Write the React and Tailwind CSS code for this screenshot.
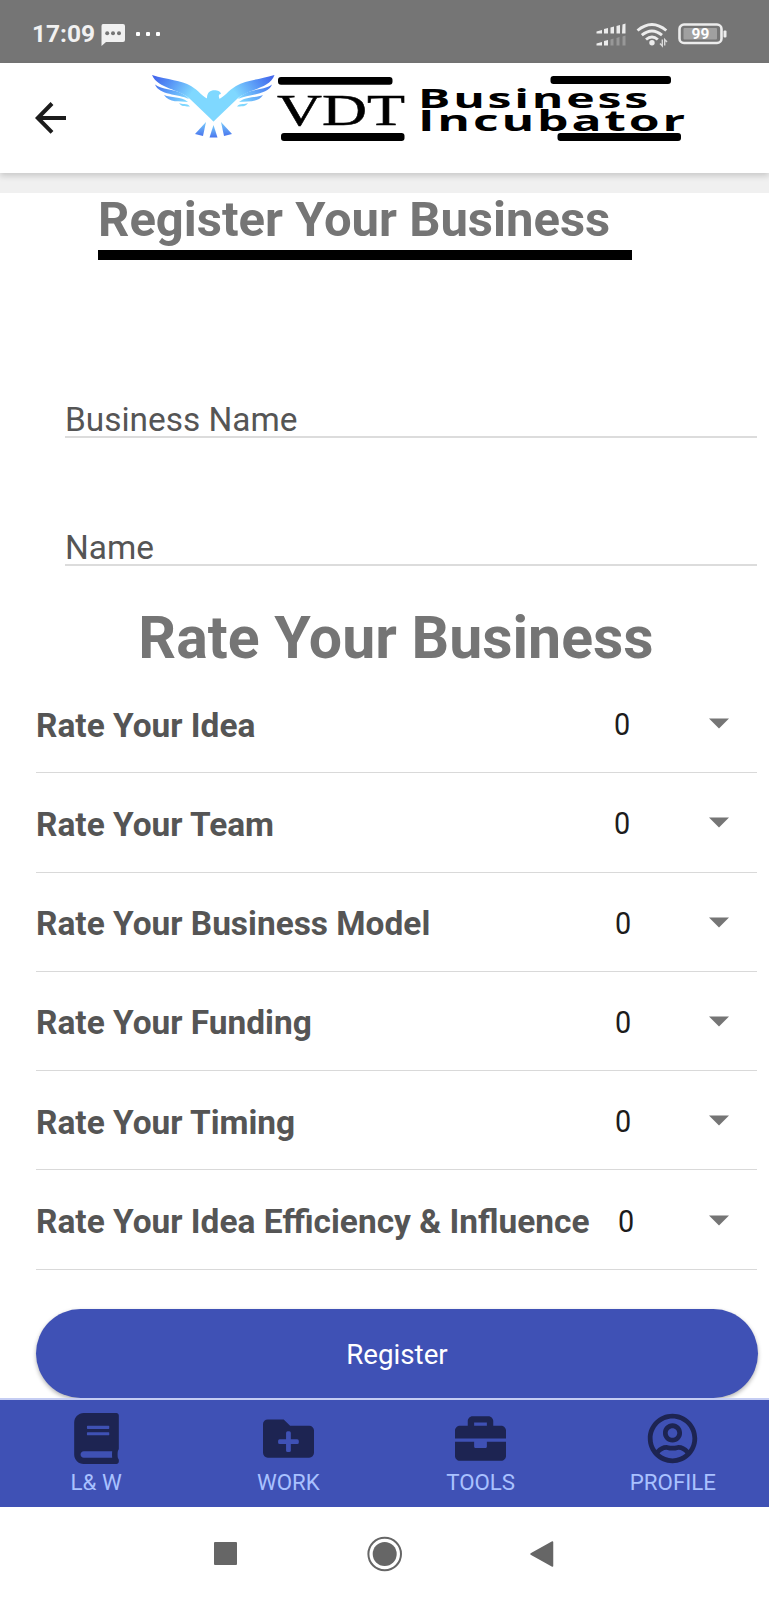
import { FaBook, FaFolderPlus, FaBriefcase, FaRegUserCircle } from "react-icons/fa";

function StatusBar() {
  return (
    <div className="flex h-[63px] items-center bg-[#757575] text-[#f1f1f1]">
      <span className="ml-8 mt-1.5 w-[64px] whitespace-nowrap text-[24.500px] font-bold leading-none">17:09</span>
      <svg className="ml-[5px] mt-[7px]" width="24" height="22" viewBox="0 0 24 22">
        <path d="M2 0H22Q24 0 24 2V16Q24 18 22 18H5L.5 22V2Q.5 0 2 0Z" fill="#f1f1f1" />
        <g fill="#757575">
          <circle cx="6.2" cy="9.3" r="2" />
          <circle cx="12" cy="9.3" r="2" />
          <circle cx="18" cy="9.3" r="2" />
        </g>
      </svg>
      <div className="ml-[11px] mt-1 flex gap-1.5">
        <i className="size-1 rounded-[1px] bg-white" />
        <i className="size-1 rounded-[1px] bg-white" />
        <i className="size-1 rounded-[1px] bg-white" />
      </div>
      <svg className="ml-auto mr-[41px] mt-2" width="132" height="26" viewBox="0 0 132 26" fill="#ececec">
        <path d="M.5 8.500 6 7v3.500H.5zM8 6l4-1v5.500H8zM14.500 4.500l3.500-1v7h-3.500zM20.500 3l3.500-1v8.500h-3.500zM26.500 1.500 29.500.5v10h-3.500z" />
        <path d="M.5 20.500 6 19v3.500H.5zM8 18l4-1v5.500H8z" />
        <path d="M14.500 16.500l3-1v7h-3zM20.500 15l3-1v8.500h-3zM26.500 13.500l3-1v10h-3z" opacity=".3" />
        <g fill="none" stroke="#ececec" strokeWidth="2.900">
          <path d="M41.500 7.500Q56 -4.500 70.300 7.500" />
          <path d="M45.800 12.200Q56 3.800 66 12.200" />
          <path d="M50 16.500Q56 11.300 61.800 16.500" />
        </g>
        <circle cx="56" cy="19.800" r="2.700" />
        <path d="M66.300 16.500V23L64 20.500M68.700 22.500V16.500L71 19" fill="none" stroke="#d8d8d8" strokeWidth="1.400" />
        <rect x="83.500" y="1.500" width="42" height="18.500" rx="4.500" fill="none" stroke="#ececec" strokeWidth="2.600" />
        <rect x="87.500" y="5" width="33.500" height="11.500" rx="1" fill="#a0a0a0" />
        <rect x="127.500" y="7.500" width="3" height="7" rx="1" />
        <text x="104.500" y="16.300" textAnchor="middle" fontFamily="Roboto, sans-serif" fontWeight="700" fontSize="15.500" fill="#fff">99</text>
      </svg>
    </div>
  );
}

function Logo() {
  return (
    <svg width="545" height="80" viewBox="145 65 545 80" className="ml-[78px] mt-0.5">
      <defs>
        <linearGradient id="left" gradientUnits="userSpaceOnUse" x1="156" y1="76" x2="196" y2="104">
          <stop offset="0" stopColor="#4468ec" />
          <stop offset=".3" stopColor="#5590f5" />
          <stop offset=".8" stopColor="#7fd8ff" />
        </linearGradient>
        <linearGradient id="right" gradientUnits="userSpaceOnUse" x1="271" y1="76" x2="231" y2="104">
          <stop offset="0" stopColor="#4468ec" />
          <stop offset=".3" stopColor="#5590f5" />
          <stop offset=".8" stopColor="#7fd8ff" />
        </linearGradient>
        <linearGradient id="tail" x1="0" y1="0" x2="0" y2="1">
          <stop offset="0" stopColor="#78ccfc" />
          <stop offset="1" stopColor="#4a76ee" />
        </linearGradient>
      </defs>
      <g fill="url(#left)">
        <path d="M152 75C168 80 181 80 191 86C198 90 204 98 208 99L213.500 104V121.500L190 99C180 89 158 89 152 75Z" />
        <path d="M155 84.500C162 90 174 89 181 93Q187 96 189 99C178 94 159 95 155 84.500Z" />
        <path d="M164 95C171 98 181 96 188 102C180 101 169 103 164 95Z" />
        <path d="M179 103C182 105 187 102.500 190 106.500C186 106 182 107.500 179 103Z" />
      </g>
      <g fill="url(#right)">
        <path d="M274.500 75C258 80 246 80 236 86C229 90 223 98 219 99L213.500 104V121.500L237 99C247 89 270 89 274.500 75Z" />
        <path d="M272 84.500C265 90 253 89 246 93Q240 96 238 99C249 94 268 95 272 84.500Z" />
        <path d="M263 95C256 98 246 96 239 102C247 101 258 103 263 95Z" />
        <path d="M248 103C245 105 240 102.500 237 106.500C241 106 245 107.500 248 103Z" />
      </g>
      <path d="M207 98C207 91 212 89.500 217 90.500Q220.500 91 221 94Q217.500 94 219.500 99L226 104L213.500 121.500L201 104Z" fill="#7fd8ff" />
      <g fill="url(#tail)">
        <path d="M206 122L203 136L195 134Z" />
        <path d="M213.500 125L217.500 137.500H209.500Z" />
        <path d="M221 122L232 134L224 136Z" />
      </g>
      <g fill="#000">
        <rect x="278" y="77" width="114.500" height="7.800" rx="3" />
        <rect x="281" y="133" width="123.500" height="8" rx="3" />
        <rect x="550.500" y="76" width="120.500" height="8" rx="3" />
        <rect x="557.500" y="133" width="123.500" height="8" rx="3" />
        <text x="277" y="125" fontFamily="'Liberation Serif', serif" fontSize="45" stroke="#000" strokeWidth=".5" textLength="128" lengthAdjust="spacingAndGlyphs">VDT</text>
        <text x="418" y="108" fontFamily="'Open Sans', sans-serif" fontWeight="700" fontSize="27.500" letterSpacing="1.600" textLength="233" lengthAdjust="spacingAndGlyphs">Business</text>
        <text x="418" y="131" fontFamily="'Open Sans', sans-serif" fontWeight="700" fontSize="28" letterSpacing="1.600" textLength="270" lengthAdjust="spacingAndGlyphs">Incubator</text>
      </g>
    </svg>
  );
}

function Header() {
  return (
    <header className="relative flex h-[110px] items-start bg-white shadow-[0_3px_6px_rgba(0,0,0,0.16)]">
      <svg className="ml-[35px] mt-[39px]" width="32" height="32" viewBox="0 0 32 32" fill="none" stroke="#1c1c1c" strokeWidth="4">
        <path d="M17 1.500 2.800 16 17 30.300M3 16H31" />
      </svg>
      <Logo />
    </header>
  );
}

function Field({ label }) {
  return (
    <div className="ml-[65px] mr-3 flex h-[128.500px] items-end border-b-2 border-[#dcdcdc]">
      <span className="text-[33.400px] leading-8 text-[#555]">{label}</span>
    </div>
  );
}

function RatingRow({ label, value = "w-[579px]" }) {
  return (
    <div className="ml-9 mr-3 flex h-[99.300px] items-center border-b-[1.500px] border-[#d9d9d9] pt-1">
      <span className={"whitespace-nowrap pt-px text-[33.450px] font-bold text-[#555] " + value}>{label}</span>
      <span className="mb-0.5 origin-left scale-x-90 text-[32px] text-[#1c1c1c]">0</span>
      <svg className="mb-[3px] ml-auto mr-[28px]" width="20" height="11" viewBox="0 0 20 11">
        <path d="M0 .5H20L10 10.500Z" fill="#757575" />
      </svg>
    </div>
  );
}

function Tab({ icon: Icon, label }) {
  return (
    <div className="flex flex-1 flex-col items-center pt-[13px]">
      <Icon className="size-[51px] text-[#1d2452]" />
      <span className="mt-1 text-[22.300px] leading-7 text-[#a9c1ff]">{label}</span>
    </div>
  );
}

export default function App() {
  return (
    <div className="flex h-[1600px] w-[769px] flex-col overflow-hidden bg-white font-['Roboto',sans-serif]">
      <StatusBar />
      <Header />
      <div className="h-5 bg-[#f0f0f0]" />
      <div className="ml-[98px] h-[67px] w-[534px] border-b-[10px] border-black">
        <h1 className="whitespace-nowrap text-[49px] font-bold leading-[54px] text-[#757575]">Register Your Business</h1>
      </div>
      <div className="h-[49px]" />
      <Field label="Business Name" />
      <Field label="Name" />
      <h2 className="ml-[23px] mt-9 h-[72px] whitespace-nowrap text-center text-[59px] font-bold leading-[72px] text-[#757575]">
        Rate Your Business
      </h2>
      <RatingRow label="Rate Your Idea" value="w-[578px]" />
      <RatingRow label="Rate Your Team" value="w-[578px]" />
      <RatingRow label="Rate Your Business Model" />
      <RatingRow label="Rate Your Funding" />
      <RatingRow label="Rate Your Timing" />
      <RatingRow label="Rate Your Idea Efficiency & Influence" value="w-[582px]" />
      <button className="ml-[35.500px] mr-[11.500px] mt-[39px] h-[89px] shrink-0 rounded-full bg-[#3f51b5] pl-px pt-[3px] text-[27.700px] text-white shadow-[0_2px_4px_rgba(0,0,0,0.3)]">
        Register
      </button>
      <div className="relative mt-auto h-[109px] shrink-0 border-t-2 border-[#c5cdf3] bg-[#3f51b5]">
        <nav className="flex">
          <Tab icon={FaBook} label="L& W" />
          <Tab icon={FaFolderPlus} label="WORK" />
          <Tab icon={FaBriefcase} label="TOOLS" />
          <Tab icon={FaRegUserCircle} label="PROFILE" />
        </nav>
      </div>
      <div className="flex h-[93px] shrink-0 items-center">
        <i className="ml-[213.500px] size-[23px] rounded-[1px] bg-[#666]" />
        <svg className="ml-[130.500px]" width="36" height="36" viewBox="0 0 36 36">
          <circle cx="17.700" cy="18" r="16.300" fill="none" stroke="#666" strokeWidth="2" />
          <circle cx="17.700" cy="18" r="12" fill="#666" />
        </svg>
        <svg className="ml-[127px]" width="24" height="26" viewBox="0 0 24 26">
          <path d="M22.500 1V25L1 13Z" fill="#666" stroke="#666" strokeWidth="1.500" strokeLinejoin="round" />
        </svg>
      </div>
    </div>
  );
}
